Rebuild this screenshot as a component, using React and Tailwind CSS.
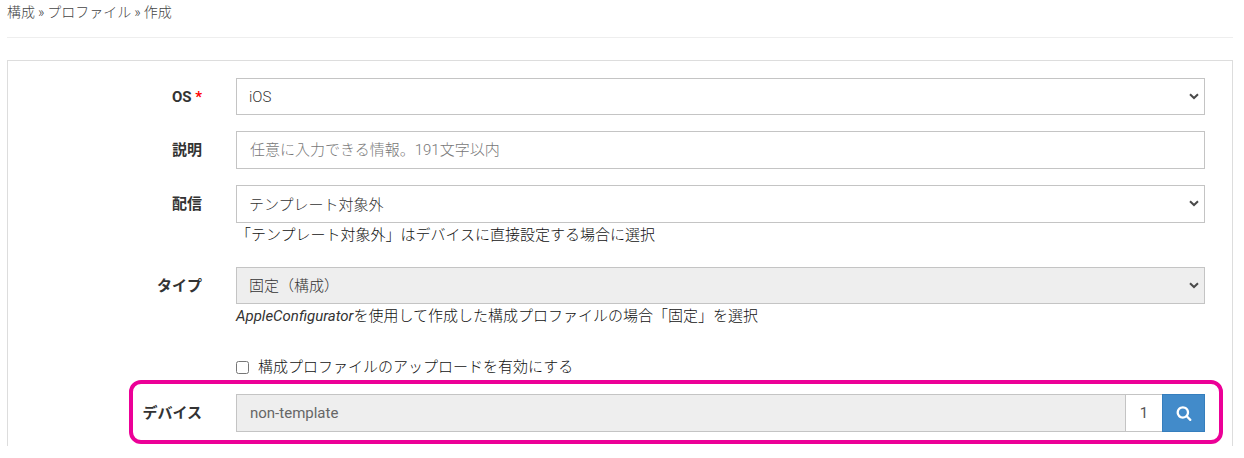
const FIELD = 'w-full rounded-none border border-[#c4c4c4] text-[15px] opacity-100 outline-none';

const FormRow = ({ id, label, required, children }) => (
    <div className="flex gap-[34px]">
        <label
            htmlFor={id}
            className="w-[194px] shrink-0 pt-2 text-right text-[15px] leading-[22px] font-bold text-[#333]"
        >
            {label}
            {required && <span className="text-[#f00]"> *</span>}
        </label>
        <div className="min-w-0 flex-1">{children}</div>
    </div>
);

const Select = ({ className, children, ...props }) => (
    <div className="relative">
        <select
            {...props}
            className={`${FIELD} block appearance-none pt-0.5 pr-7 pl-3 font-light text-[#333] ${className}`}
        >
            {children}
        </select>
        <svg
            viewBox="0 0 10 7"
            fill="none"
            stroke="#4a4a4a"
            strokeWidth="2"
            className="pointer-events-none absolute top-[15px] right-[6px] h-[7px] w-[10px]"
        >
            <path d="M1 1.2 5 5 9 1.2" />
        </svg>
    </div>
);

const Help = ({ children }) => (
    <p className="text-[15px] leading-6 font-light text-[#111]">{children}</p>
);

const SearchIcon = () => (
    <svg viewBox="0 0 1792 1792" fill="currentColor" className="size-4">
        <path d="M1216 832q0-185-131.5-316.5t-316.5-131.5-316.5 131.5-131.5 316.5 131.5 316.5 316.5 131.5 316.5-131.5 131.5-316.5zm512 832q0 52-38 90t-90 38q-54 0-90-38l-343-342q-179 124-399 124-143 0-273.5-55.5t-225-150-150-225-55.5-273.5 55.5-273.5 150-225 225-150 273.5-55.5 273.5 55.5 225 150 150 225 55.5 273.5q0 220-124 399l343 343q37 37 37 90z" />
    </svg>
);

const App = () => (
    <div className="bg-white pr-[11px] pl-[7px] pb-3 font-['Roboto','Noto_Sans_CJK_JP',sans-serif]">
        <nav className="flex gap-[3px] border-b border-[#eee] pb-[13px] text-sm leading-6 font-light text-[#444]">
            <a href="#config">構成</a>
            <span>»</span>
            <a href="#profile">プロファイル</a>
            <span>»</span>
            <span>作成</span>
        </nav>

        <form className="mt-[22px] flex flex-col gap-4 border-x border-t border-[#ddd] pt-[17px] pr-[27px] pb-[14px]">
            <FormRow id="os" label="OS" required>
                <Select id="os" className="h-[37px] bg-white">
                    <option>iOS</option>
                </Select>
            </FormRow>

            <FormRow id="description" label="説明">
                <input
                    id="description"
                    type="text"
                    placeholder="任意に入力できる情報。191文字以内"
                    className={`${FIELD} block h-[38px] bg-white px-[13px] font-light text-[#333] placeholder:text-[#777]`}
                />
            </FormRow>

            <FormRow id="delivery" label="配信">
                <Select id="delivery" className="h-[38px] bg-white">
                    <option>テンプレート対象外</option>
                </Select>
                <Help>「テンプレート対象外」はデバイスに直接設定する場合に選択</Help>
            </FormRow>

            <div className="pt-1">
                <FormRow id="type" label="タイプ">
                    <Select id="type" disabled className="h-[37px] bg-[#eee]">
                        <option>固定（構成）</option>
                    </Select>
                    <Help>
                        <em className="font-normal text-[#333]">AppleConfigurator</em>
                        を使用して作成した構成プロファイルの場合「固定」を選択
                    </Help>
                    <label className="mt-7 flex items-center gap-[9px] text-[15px] leading-[22px] font-light text-[#111]">
                        <input type="checkbox" className="size-[13px]" />
                        構成プロファイルのアップロードを有効にする
                    </label>
                </FormRow>
            </div>

            {/* Device row with highlight frame */}
            <div className="relative">
                <FormRow id="device" label="デバイス">
                    <div className="flex h-[38px]">
                        <input
                            id="device"
                            type="text"
                            readOnly
                            value="non-template"
                            className={`${FIELD} min-w-0 flex-1 bg-[#eee] px-[13px] text-[#666]`}
                        />
                        <span className="flex w-9 items-center justify-center border-y border-[#c4c4c4] bg-white text-[15px] text-[#555]">
                            1
                        </span>
                        <button
                            type="button"
                            aria-label="検索"
                            className="flex w-[43px] items-center justify-center border border-[#357ebd] bg-[#428bca] text-white"
                        >
                            <SearchIcon />
                        </button>
                    </div>
                </FormRow>
                <div className="pointer-events-none absolute -top-[14px] -right-[18px] -bottom-3 left-[121px] rounded-xl border-4 border-[#ec0097]" />
            </div>
        </form>
    </div>
);

export default App;
